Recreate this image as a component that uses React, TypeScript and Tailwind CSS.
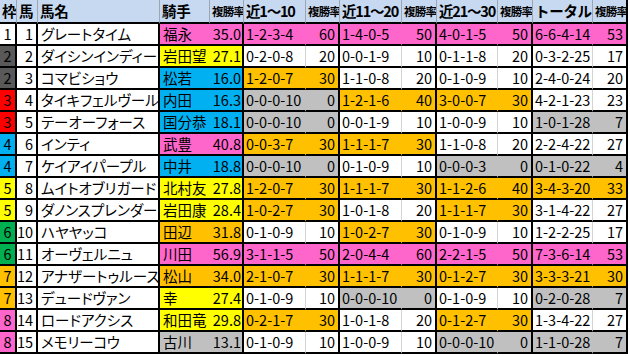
const W = "bg-white";
const P = "bg-[#ff66cc]";
const Y = "bg-[#ffff00]";
const C = "bg-[#00b0f0]";
const O = "bg-[#ffc000]";
const G = "bg-[#c0c0c0]";
const R = "bg-[#ff0000]";
const D = "bg-[#595959]";
const GR = "bg-[#00b050]";

type Rec = [string, string, string];
type Row = {
  waku: string;
  wc: string;
  no: string;
  name: string;
  jockey: string;
  jc: string;
  rate: string;
  recs: Rec[];
};

const rows: Row[] = [
  { waku: "1", wc: W, no: "1", name: "グレートタイム", jockey: "福永", jc: P, rate: "35.0", recs: [["1-2-3-4", "60", P], ["1-4-0-5", "50", P], ["4-0-1-5", "50", P], ["6-6-4-14", "53", P]] },
  { waku: "2", wc: D, no: "2", name: "ダイシンインディー", jockey: "岩田望", jc: Y, rate: "27.1", recs: [["0-2-0-8", "20", W], ["0-0-1-9", "10", W], ["0-1-1-8", "20", W], ["0-3-2-25", "17", W]] },
  { waku: "2", wc: D, no: "3", name: "コマビショウ", jockey: "松若", jc: C, rate: "16.0", recs: [["1-2-0-7", "30", O], ["1-1-0-8", "20", W], ["0-1-0-9", "10", W], ["2-4-0-24", "20", W]] },
  { waku: "3", wc: R, no: "4", name: "タイキフェルヴール", jockey: "内田", jc: C, rate: "16.3", recs: [["0-0-0-10", "0", G], ["1-2-1-6", "40", O], ["3-0-0-7", "30", O], ["4-2-1-23", "23", W]] },
  { waku: "3", wc: R, no: "5", name: "テーオーフォース", jockey: "国分恭", jc: C, rate: "18.1", recs: [["0-0-0-10", "0", G], ["0-0-1-9", "10", W], ["1-0-0-9", "10", W], ["1-0-1-28", "7", G]] },
  { waku: "4", wc: C, no: "6", name: "インティ", jockey: "武豊", jc: P, rate: "40.8", recs: [["0-0-3-7", "30", O], ["1-1-1-7", "30", O], ["1-1-0-8", "20", W], ["2-2-4-22", "27", W]] },
  { waku: "4", wc: C, no: "7", name: "ケイアイパープル", jockey: "中井", jc: C, rate: "18.8", recs: [["0-0-0-10", "0", G], ["0-1-0-9", "10", W], ["0-0-0-3", "0", G], ["0-1-0-22", "4", G]] },
  { waku: "5", wc: Y, no: "8", name: "ムイトオブリガード", jockey: "北村友", jc: Y, rate: "27.8", recs: [["1-2-0-7", "30", O], ["1-1-1-7", "30", O], ["1-1-2-6", "40", O], ["3-4-3-20", "33", O]] },
  { waku: "5", wc: Y, no: "9", name: "ダノンスプレンダー", jockey: "岩田康", jc: Y, rate: "28.4", recs: [["1-0-2-7", "30", O], ["1-0-1-8", "20", W], ["1-1-1-7", "30", O], ["3-1-4-22", "27", W]] },
  { waku: "6", wc: GR, no: "10", name: "ハヤヤッコ", jockey: "田辺", jc: O, rate: "31.8", recs: [["0-1-0-9", "10", W], ["1-0-2-7", "30", O], ["0-1-0-9", "10", W], ["1-2-2-25", "17", W]] },
  { waku: "6", wc: GR, no: "11", name: "オーヴェルニュ", jockey: "川田", jc: P, rate: "56.9", recs: [["3-1-1-5", "50", P], ["2-0-4-4", "60", P], ["2-2-1-5", "50", P], ["7-3-6-14", "53", P]] },
  { waku: "7", wc: O, no: "12", name: "アナザートゥルース", jockey: "松山", jc: O, rate: "34.0", recs: [["2-1-0-7", "30", O], ["1-1-1-7", "30", O], ["0-1-2-7", "30", O], ["3-3-3-21", "30", O]] },
  { waku: "7", wc: O, no: "13", name: "デュードヴァン", jockey: "幸", jc: Y, rate: "27.4", recs: [["0-1-0-9", "10", W], ["0-0-0-10", "0", G], ["0-1-0-9", "10", W], ["0-2-0-28", "7", G]] },
  { waku: "8", wc: P, no: "14", name: "ロードアクシス", jockey: "和田竜", jc: Y, rate: "29.8", recs: [["0-2-1-7", "30", O], ["1-0-1-8", "20", W], ["0-1-2-7", "30", O], ["1-3-4-22", "27", W]] },
  { waku: "8", wc: P, no: "15", name: "メモリーコウ", jockey: "古川", jc: G, rate: "13.1", recs: [["0-1-0-9", "10", W], ["1-0-0-9", "10", W], ["0-0-0-10", "0", G], ["1-1-0-28", "7", G]] },
];

const headers = ["枠", "馬", "馬名", "騎手", "複勝率", "近1～10", "複勝率", "近11～20", "複勝率", "近21～30", "複勝率", "トータル", "複勝率"];

const cell = "box-border h-[22px] overflow-hidden whitespace-nowrap border-b-2 border-b-black leading-[20px]";
const dark = "border-r-2 border-r-black";

function headStyle(h: string) {
  if (h === "複勝率") return "pl-[2px] text-[11.5px] tracking-[-0.8px]";
  if (h.startsWith("近")) return "pl-[2px] tracking-[-1.2px]";
  return "pl-[2px] tracking-[-0.3px]";
}

export default function App() {
  return (
    <div className="h-[356px] w-[630px] overflow-hidden bg-white font-['Noto_Sans_CJK_JP','Noto_Sans',sans-serif] text-[14.5px] text-black">
      <div className="grid w-[628px] grid-cols-[17px_21px_122px_50px_34px_62px_34px_62px_35px_61px_35px_60px_35px]">
        {headers.map((h, i) => (
          <div
            key={i}
            className={`box-border h-[24px] overflow-hidden whitespace-nowrap border-b-2 border-r border-b-black border-r-[#9aa6b4] bg-[#c6d9f0] font-bold leading-[22px] ${headStyle(h)} ${
              i === 12 ? "border-r-2 border-r-black" : ""
            }`}
          >
            {h}
          </div>
        ))}
        {rows.map((r, ri) => (
          <Line key={ri} r={r} />
        ))}
      </div>
    </div>
  );
}

function Line({ r }: { r: Row }) {
  return (
    <>
      <div className={`${cell} ${dark} ${r.wc} text-center`}>{r.waku}</div>
      <div className={`${cell} ${dark} bg-white pr-[3px] text-right`}>{r.no}</div>
      <div className={`${cell} ${dark} bg-white pl-[3px] [font-feature-settings:'palt']`}>{r.name}</div>
      <div className={`${cell} ${r.jc} pl-[3px]`}>{r.jockey}</div>
      <div className={`${cell} ${dark} ${r.jc} pr-[1px] text-right`}>{r.rate}</div>
      {r.recs.map(([rec, pct, bg], i) => (
        <Pair key={i} rec={rec} pct={pct} bg={bg} />
      ))}
    </>
  );
}

function Pair({ rec, pct, bg }: { rec: string; pct: string; bg: string }) {
  const grid = bg === W ? "border-r-[#d4d4d4]" : "border-r-transparent";
  return (
    <>
      <div className={`${cell} border-r ${grid} ${bg} pl-[2px]`}>{rec}</div>
      <div className={`${cell} ${dark} ${bg} pr-[3px] text-right`}>{pct}</div>
    </>
  );
}
